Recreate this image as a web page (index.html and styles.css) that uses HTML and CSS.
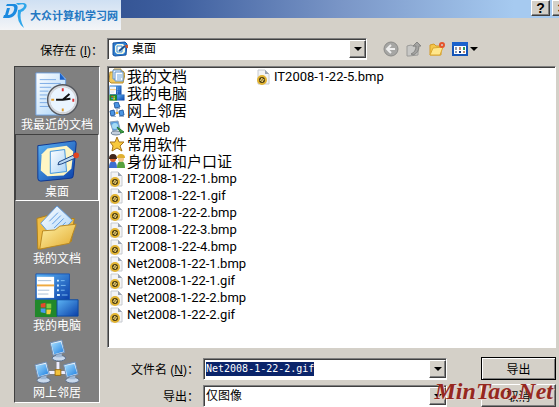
FILE: index.html
```html
<!DOCTYPE html>
<html lang="zh-CN">
<head>
    <meta charset="UTF-8">
    <meta name="viewport" content="width=device-width, initial-scale=1.0">
    <title>导出</title>
    <link rel="stylesheet" href="styles.css">
</head>
<body>
    <svg class="defs" aria-hidden="true">
        <defs>
            <linearGradient id="blue" x1="0" y1="0" x2="1" y2="1">
                <stop offset="0" stop-color="#5cb4f4"/><stop offset="1" stop-color="#0a3fa8"/>
            </linearGradient>
            <linearGradient id="screen" x1="0" y1="0" x2="1" y2="1">
                <stop offset="0" stop-color="#a8e0ff"/><stop offset="1" stop-color="#1f7fe0"/>
            </linearGradient>
            <linearGradient id="paper" x1="0" y1="0" x2="1" y2="1">
                <stop offset="0" stop-color="#ffffff"/><stop offset="1" stop-color="#a9d3f7"/>
            </linearGradient>
            <linearGradient id="gold" x1="0" y1="0" x2="1" y2="1">
                <stop offset="0" stop-color="#fff3a8"/><stop offset="1" stop-color="#e2a92c"/>
            </linearGradient>
        </defs>
        <symbol id="recent" viewBox="0 0 48 48">
            <path d="M2 2h25l6 6v38H2z" fill="url(#paper)" stroke="#6f9fdc"/>
            <path d="M27 2v7h6z" fill="#1c62c8"/>
            <path d="M6 9h17M6 13h22M6 17h12M6 21h9M6 25h8M6 29h7M6 33h9M6 37h12" stroke="#7aaae4"/>
            <circle cx="30" cy="30" r="15" fill="#eaf5ff" stroke="#55585e" stroke-width="3"/>
            <circle cx="30" cy="30" r="14" fill="none" stroke="#d5d8dc" stroke-width="2"/>
            <path d="M23 30h7l7-6M30 30l8-1" fill="none" stroke="#111" stroke-width="2"/>
            <path d="M29 18h2v3h-2zM40 29h2v3h-2z" fill="#d33"/>
            <path d="M29 39h2v3h-2zM18 29h3v2h-3z" fill="#e09a2a"/>
        </symbol>
        <symbol id="desktop" viewBox="0 0 48 48">
            <path d="M4 8l38-5q2 0 2 3l-3 33q0 3-3 3L7 45q-3 0-3-3z" fill="url(#blue)" stroke="#0b3590"/>
            <path d="M14 11l20-3 7 6-2 18-8 7-17 1-7-6 1-17z" fill="#fff6c4"/>
            <path d="M17 14l15-2 2 23-17 2z" fill="url(#paper)" stroke="#3e92dc" stroke-width="1"/>
            <path d="M26 25l15-7 2 3-14 6-4 1z" fill="#b9d9f4" stroke="#173f7c"/>
            <circle cx="44" cy="18" r="3" fill="#e2441e"/>
        </symbol>
        <symbol id="desktop-small" viewBox="0 0 16 16">
            <path d="M1 2l12-1 2 2-1 11-11 1-2-1z" fill="#2f7fd0" stroke="#15509e"/>
            <path d="M5 3h6l2 2v6l-2 2H5l-2-2V5z" fill="#f2f7e4"/>
            <path d="M5 5h5v6H5z" fill="#fff" stroke="#3f92da"/>
            <path d="M7 10l6-5" stroke="#1d4f8c" stroke-width="2"/>
            <path d="M13 4h3v3h-2z" fill="#c9552a"/>
        </symbol>
        <symbol id="docs" viewBox="0 0 48 48">
            <path d="M3 14l11-3 4 5 24-2-3 24L7 46H4z" fill="#efbd46" stroke="#b07e18"/>
            <path d="M24 1l16 15-18 21-15-18z" fill="url(#paper)" stroke="#5f9ce0"/>
            <path d="M16 17l9-9M19 20l9-9M21 24l10-10M24 27l9-9" stroke="#5c9be2"/>
            <path d="M9 27l13-1 5-4 17-2-7 20L6 46z" fill="url(#gold)" stroke="#b98820"/>
        </symbol>
        <symbol id="computer" viewBox="0 0 48 48">
            <path d="M2 2h35v27H2z" fill="url(#blue)" stroke="#1b57b4"/>
            <path d="M3 5h18v22H3z" fill="#fff"/>
            <path d="M4 9h14M4 19h12M4 23h11" stroke="#a9bed5"/>
            <path d="M3 14h18" stroke="#efaa40" stroke-width="2"/>
            <path d="M24 9h2M24 14h2M24 19h2M24 24h3" stroke="#d7efff" stroke-width="2"/>
            <path d="M28 9h4M28 14h5M28 19h4M29 24h6" stroke="#7cbdf2"/>
            <path d="M1 29h23v18H1z" fill="#21882a"/>
            <path d="M24 29h22v17H24z" fill="url(#blue)" stroke="#0c48a0"/>
            <path d="M7 33l5-1v5H7z" fill="#e5482c"/><path d="M13 33h5v5h-5z" fill="#82cc45"/>
            <path d="M7 38h5v5l-5-1z" fill="#469cec"/><path d="M13 39h5l-1 5h-4z" fill="#f5cf3c"/>
        </symbol>
        <symbol id="pc" viewBox="0 0 18 24">
            <ellipse cx="10" cy="20" rx="7" ry="3" fill="#c9d9ec" stroke="#5a6f8c"/>
            <path d="M7 15h6v4H7z" fill="#9eb8d6"/>
            <path d="M1 4l12-3 3 13-12 3z" fill="#e5eef8" stroke="#6d8cb4"/>
            <path d="M2 5l10-2 3 10-10 3z" fill="url(#screen)"/>
        </symbol>
        <symbol id="network" viewBox="0 0 48 48">
            <path d="M25 24v11M9 35h32" stroke="#eef" stroke-width="3"/>
            <use href="#pc" x="16" y="0" width="18" height="24"/>
            <use href="#pc" x="0" y="23" width="18" height="24"/>
            <use href="#pc" x="30" y="23" width="18" height="24"/>
            <path d="M22 32h6v6h-6z" fill="#f4c23a" stroke="#9a6b10"/>
        </symbol>
        <symbol id="network-small" viewBox="0 0 16 16">
            <path d="M8 6v5M4 11h8" stroke="#8a97a8"/>
            <path d="M5 1l4-1 2 5-5 1zM1 9l4-1 1 5-4 1zM10 9l4-1 1 5-4 1z" fill="#4a96e4" stroke="#2a62a8"/>
            <path d="M2 14h5v1H2zM10 14h5v1h-5zM6 6h5v1H6z" fill="#9db3cc"/>
            <path d="M7 10h2v2H7z" fill="#e8b338"/>
        </symbol>
        <symbol id="docs-small" viewBox="0 0 16 16">
            <path d="M1 4h3l1-3h7v2h2l2 3-2 9H2L0 13z" fill="#f2c95c" stroke="#b58a2c"/>
            <path d="M4 2h8v9H4z" fill="#eaf4ff" stroke="#5f93cc"/>
            <path d="M6 4h8v9H6z" fill="#fff" stroke="#5f93cc"/>
            <path d="M8 7h5M8 9h5M8 11h4" stroke="#6ca6e0"/>
        </symbol>
        <symbol id="myweb" viewBox="0 0 16 16">
            <path d="M1 2l8-1 2 8-7 2z" fill="#5b9fe0" stroke="#8aa0b8"/>
            <circle cx="6" cy="6" r="3" fill="#a5dcf5"/>
            <ellipse cx="7" cy="13" rx="5" ry="2" fill="#c4cfdd" stroke="#76889c"/>
            <path d="M8 7l7 5-3 1z" fill="#3fa045" stroke="#247a2c"/>
        </symbol>
        <symbol id="star" viewBox="0 0 16 16">
            <path d="M8 1l2 5h5l-4 4 2 5-5-3-5 3 1-5-3-4h5z" fill="#f8c93c" stroke="#a8741c"/>
        </symbol>
        <symbol id="users" viewBox="0 0 16 16">
            <path d="M0 15q0-7 4-7t4 7z" fill="#3d6fd0"/>
            <path d="M8 15q0-7 4-7t4 7z" fill="#58a23e"/>
            <circle cx="4" cy="6" r="3" fill="#d9622c"/><path d="M0 6q0-5 4-5t4 5z" fill="#41261a"/>
            <circle cx="12" cy="6" r="3" fill="#f2c78c"/><path d="M8 5q0-4 4-4t4 4z" fill="#e0b030"/>
        </symbol>
        <symbol id="image" viewBox="0 0 16 16">
            <path d="M2 1h7l4 4v10H2z" fill="#f3f4f6" stroke="#c6cad0"/>
            <path d="M9 1v4h4z" fill="#9aa4b4"/>
            <circle cx="6" cy="11" r="4" fill="#4a3d12" stroke="#e3b432" stroke-width="2"/>
            <path d="M4 12l2-3v4l2-3" fill="none" stroke="#efd377"/>
        </symbol>
    </svg>

    <div class="dialog">
        <header class="titlebar">
            <button class="caption" aria-label="帮助">?</button>
            <button class="caption" aria-label="关闭">×</button>
        </header>

        <div class="look-in">
            <label class="label" for="folder">保存在 (<u>I</u>)：</label>
            <div class="combo">
                <svg class="icon"><use href="#desktop-small"/></svg>
                <select id="folder"><option>桌面</option></select>
                <span class="arrow"></span>
            </div>
            <div class="tools">
                <button class="tool" aria-label="后退">
                    <svg viewBox="0 0 16 16"><circle cx="8" cy="8" r="7" fill="#a6a6a4" stroke="#8b8b89"/><path d="M8 4L4 8l4 4M4 8h8" fill="none" stroke="#eee" stroke-width="2"/></svg>
                </button>
                <button class="tool" aria-label="向上一级">
                    <svg viewBox="0 0 16 16"><path d="M1 5l4-1 2 1h5v9l-9 1H1z" fill="#c8c8c6" stroke="#9a9a98"/><path d="M5 13q5-2 5-8H7l4-4 4 4h-2q0 7-6 9z" fill="#a3a3a1" stroke="#858583"/></svg>
                </button>
                <button class="tool" aria-label="新建文件夹">
                    <svg viewBox="0 0 16 16"><path d="M1 4l4-1 2 2h5v9H1z" fill="#f4c64a" stroke="#d49b28"/><path d="M1 14l3-7 10-1-3 8z" fill="#ffe78c" stroke="#dba831"/><circle cx="13" cy="4" r="2" fill="none" stroke="#e5532b" stroke-width="2"/></svg>
                </button>
                <button class="tool" aria-label="查看">
                    <svg viewBox="0 0 16 16"><path d="M1 2h14v12H1z" fill="#fff" stroke="#1455b8" stroke-width="2"/><path d="M0 1h16v4H0z" fill="#1b62cc"/><path d="M3 6h2v3H3zM3 10h2v2H3z" fill="#8f9ab0"/><path d="M7 6h2v3H7zM11 10h2v2h-2z" fill="#c08a6e"/><path d="M11 6h2v3h-2z" fill="#2c9a58"/><path d="M7 10h2v2H7z" fill="#123a80"/></svg>
                    <span class="triangle"></span>
                </button>
            </div>
        </div>

        <main class="main">
            <nav class="places">
                <a class="place" href="#recent"><svg><use href="#recent"/></svg>我最近的文档</a>
                <a class="place selected" href="#desktop"><svg><use href="#desktop"/></svg>桌面</a>
                <a class="place" href="#docs"><svg><use href="#docs"/></svg>我的文档</a>
                <a class="place" href="#computer"><svg><use href="#computer"/></svg>我的电脑</a>
                <a class="place" href="#network"><svg><use href="#network"/></svg>网上邻居</a>
            </nav>

            <div class="content">
                <ul class="files">
                    <li class="folder"><svg class="icon"><use href="#docs-small"/></svg>我的文档</li>
                    <li class="folder"><svg class="icon"><use href="#computer"/></svg>我的电脑</li>
                    <li class="folder"><svg class="icon"><use href="#network-small"/></svg>网上邻居</li>
                    <li><svg class="icon"><use href="#myweb"/></svg>MyWeb</li>
                    <li class="folder"><svg class="icon"><use href="#star"/></svg>常用软件</li>
                    <li class="folder"><svg class="icon"><use href="#users"/></svg>身份证和户口证</li>
                    <li><svg class="icon"><use href="#image"/></svg>IT2008-1-22-1.bmp</li>
                    <li><svg class="icon"><use href="#image"/></svg>IT2008-1-22-1.gif</li>
                    <li><svg class="icon"><use href="#image"/></svg>IT2008-1-22-2.bmp</li>
                    <li><svg class="icon"><use href="#image"/></svg>IT2008-1-22-3.bmp</li>
                    <li><svg class="icon"><use href="#image"/></svg>IT2008-1-22-4.bmp</li>
                    <li><svg class="icon"><use href="#image"/></svg>Net2008-1-22-1.bmp</li>
                    <li><svg class="icon"><use href="#image"/></svg>Net2008-1-22-1.gif</li>
                    <li><svg class="icon"><use href="#image"/></svg>Net2008-1-22-2.bmp</li>
                    <li><svg class="icon"><use href="#image"/></svg>Net2008-1-22-2.gif</li>
                    <li><svg class="icon"><use href="#image"/></svg>IT2008-1-22-5.bmp</li>
                </ul>

                <form class="fields">
                    <label class="label" for="filename">文件名 (<u>N</u>)：</label>
                    <div class="combo">
                        <input id="filename" type="text" value="Net2008-1-22-2.gif">
                        <span class="arrow"></span>
                    </div>
                    <button class="action default" type="submit">导出</button>

                    <label class="label" for="filetype">导出：</label>
                    <div class="combo">
                        <select id="filetype"><option>仅图像</option></select>
                        <span class="arrow"></span>
                    </div>
                    <button class="action" type="button">取消</button>
                </form>
            </div>
        </main>

        <div class="site-logo">
            <svg viewBox="0 0 30 30"><path d="M7 4h8q4 1 2 7-2 6-8 7H3l1-3h5q4-1 5-5t-2-4H6zM7 8h3l-2 7H5z" fill="#1b8ae0"/><path d="M16 3h8q4 1 2 5-2 3-5 4-2 6 3 16-8-6-6-18 5-1 6-4t-6-1z" fill="#2ea6ea"/></svg>
            <span>大众计算机学习网</span>
        </div>
        <div class="watermark">MinTao.Net</div>
    </div>
</body>
</html>
```
FILE: styles.css
```css
* {
    box-sizing: border-box;
}

body {
    margin: 0;
    background: #d4d0c8;
    color: #000;
    font-family: "Liberation Sans", "Noto Sans CJK SC", sans-serif;
    font-size: 12px;
}

button, input, select {
    margin: 0;
    padding: 0;
    border: 0;
    border-radius: 0;
    color: inherit;
    font: inherit;
}

.defs {
    position: absolute;
    width: 0;
    height: 0;
}

.dialog {
    position: relative;
    overflow: hidden;
}

.titlebar {
    display: flex;
    justify-content: flex-end;
    gap: 2px;
    height: 18px;
    margin-right: -12px;
    background: linear-gradient(to right, #23407f, #3d5e9e 30%, #7a96c7 60%, #a6caf0 90%);
}

.caption {
    width: 19px;
    height: 16px;
    background: #d4d0c8;
    border: 1px solid;
    border-color: #fff #404040 #404040 #fff;
    box-shadow: inset -1px -1px #808080;
    font-size: 14px;
    font-weight: bold;
    line-height: 14px;
}

.look-in {
    display: flex;
    align-items: center;
    height: 48px;
    padding-top: 20px;
    padding-bottom: 6px;
}

.look-in .label {
    width: 107px;
}

.look-in .combo {
    width: 260px;
}

.label {
    padding-right: 4px;
    text-align: right;
    white-space: nowrap;
}

.combo {
    display: flex;
    align-items: center;
    height: 22px;
    padding-left: 2px;
    background: #fff;
    border: 1px solid;
    border-color: #808080 #fff #fff #808080;
    box-shadow: inset 1px 1px #404040;
}

.combo select {
    flex: 1;
    min-width: 0;
    appearance: none;
    background: transparent;
}

.look-in select {
    padding-left: 4px;
}

.look-in .icon {
    margin-left: 2px;
}

.arrow {
    display: flex;
    align-items: center;
    justify-content: center;
    width: 17px;
    height: 18px;
    margin-left: auto;
    background: #d4d0c8;
    border: 1px solid;
    border-color: #fff #404040 #404040 #fff;
    box-shadow: inset -1px -1px #808080;
}

.arrow::after, .triangle {
    content: "";
    border: 4px solid transparent;
    border-top-color: #000;
    border-bottom: 0;
}

.icon {
    flex: none;
    width: 16px;
    height: 16px;
}

.tools {
    display: flex;
    gap: 7px;
    margin-left: 16px;
}

.tool {
    display: flex;
    align-items: center;
    gap: 2px;
    background: transparent;
}

.tool svg {
    width: 16px;
    height: 16px;
}

.main {
    display: flex;
    gap: 7px;
    padding: 0 3px 0 14px;
}

.places {
    flex: none;
    align-self: flex-start;
    width: 86px;
    background: #808080;
    border: 1px solid;
    border-color: #404040 #fff #fff #404040;
}

.place {
    display: flex;
    flex-direction: column;
    align-items: center;
    height: 67px;
    padding-top: 3px;
    border: 1px solid transparent;
    color: #fff;
    line-height: 16px;
    text-decoration: none;
}

.place svg {
    width: 48px;
    height: 48px;
}

.place.selected {
    border-color: #404040 #fff #fff #404040;
}

.content {
    flex: 1;
    min-width: 0;
}

.files {
    display: grid;
    grid-auto-flow: column;
    grid-template-rows: repeat(15, 17px);
    grid-auto-columns: 147px;
    height: 282px;
    margin: 0;
    padding: 1px;
    background: #fff;
    border: 1px solid;
    border-color: #808080 #fff #fff #808080;
    box-shadow: inset 1px 1px #404040;
    font-family: Roboto, sans-serif;
    font-size: 13px;
    list-style: none;
}

.files li {
    display: flex;
    align-items: center;
    gap: 2px;
    line-height: 17px;
    white-space: nowrap;
}

.files .folder {
    padding-bottom: 2px;
    font-family: "Noto Sans CJK SC", sans-serif;
    font-size: 15px;
}

.fields {
    display: grid;
    grid-template-columns: 96px 1fr 75px;
    align-items: center;
    row-gap: 4px;
    padding-top: 9px;
}

.fields .combo {
    margin-right: 34px;
}

.fields input {
    field-sizing: content;
    background: #0a246a;
    color: #fff;
    font-family: "DejaVu Sans Mono", monospace;
    font-size: 10px;
    line-height: 14px;
    outline: 0;
}

.action {
    height: 23px;
    background: #d4d0c8;
    border: 1px solid;
    border-color: #fff #404040 #404040 #fff;
    box-shadow: inset -1px -1px #808080;
}

.action.default {
    border-color: #000;
    box-shadow: inset 1px 1px #fff, inset -1px -1px #808080;
}

/* overlays */
.site-logo {
    position: absolute;
    top: 0;
    left: 0;
    display: flex;
    align-items: center;
    width: 121px;
    height: 30px;
    background: linear-gradient(#cfe0f3, #f4f5f7);
    color: #2277c2;
    font-size: 11px;
    font-weight: bold;
    white-space: nowrap;
}

.site-logo svg {
    flex: none;
    width: 30px;
    height: 30px;
}

.watermark {
    position: absolute;
    right: 6px;
    bottom: 2px;
    color: #96281f;
    font-family: "Liberation Serif", serif;
    font-size: 24px;
    font-style: italic;
    font-weight: bold;
    line-height: 28px;
    text-shadow: 1px 1px #e8d8d0;
    pointer-events: none;
}
```
